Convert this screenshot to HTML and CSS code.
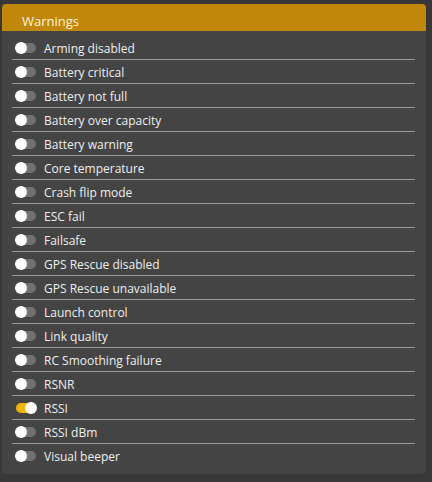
FILE: index.html
```html
<!DOCTYPE html>
<html>
<head>
<meta charset="utf-8">
<link rel="stylesheet" href="styles.css">
</head>
<body>
<div class="panel">
  <div class="header">Warnings</div>
  <ul class="list">
    <li class="row"><span class="toggle"></span><span class="label">Arming disabled</span></li>
    <li class="row"><span class="toggle"></span><span class="label">Battery critical</span></li>
    <li class="row"><span class="toggle"></span><span class="label">Battery not full</span></li>
    <li class="row"><span class="toggle"></span><span class="label">Battery over capacity</span></li>
    <li class="row"><span class="toggle"></span><span class="label">Battery warning</span></li>
    <li class="row"><span class="toggle"></span><span class="label">Core temperature</span></li>
    <li class="row"><span class="toggle"></span><span class="label">Crash flip mode</span></li>
    <li class="row"><span class="toggle"></span><span class="label">ESC fail</span></li>
    <li class="row"><span class="toggle"></span><span class="label">Failsafe</span></li>
    <li class="row"><span class="toggle"></span><span class="label">GPS Rescue disabled</span></li>
    <li class="row"><span class="toggle"></span><span class="label">GPS Rescue unavailable</span></li>
    <li class="row"><span class="toggle"></span><span class="label">Launch control</span></li>
    <li class="row"><span class="toggle"></span><span class="label">Link quality</span></li>
    <li class="row"><span class="toggle"></span><span class="label">RC Smoothing failure</span></li>
    <li class="row"><span class="toggle"></span><span class="label">RSNR</span></li>
    <li class="row"><span class="toggle on"></span><span class="label">RSSI</span></li>
    <li class="row"><span class="toggle"></span><span class="label">RSSI dBm</span></li>
    <li class="row"><span class="toggle"></span><span class="label">Visual beeper</span></li>
  </ul>
</div>
</body>
</html>
```
FILE: styles.css
```css
html, body {
  margin: 0;
  padding: 0;
  background: #383838;
  font-family: "Open Sans", "Liberation Sans", sans-serif;
}
body {
  padding: 4px 6px 8px 2px;
}
.panel {
  background: #434443;
  border-radius: 4px;
  overflow: hidden;
  height: 470px;
  box-sizing: border-box;
}
.header {
  background: #c0870a;
  color: #fff3dc;
  font-size: 13px;
  height: 20px;
  line-height: 20px;
  padding: 7px 0 0 20px;
}
.list {
  list-style: none;
  margin: 0;
  padding: 5px 11px 0 10px;
}
.row {
  display: flex;
  align-items: center;
  height: 23px;
  border-bottom: 1px solid #9a9a9a;
  color: #eeeeee;
  font-size: 12px;
}
.label {
  padding-top: 1px;
}
.row:last-child {
  border-bottom: none;
}
.toggle {
  position: relative;
  width: 20px;
  height: 10px;
  border-radius: 5px;
  background: #707070;
  margin-left: 4px;
  margin-right: 8px;
  flex: none;
}
.toggle::after {
  content: "";
  position: absolute;
  left: -1px;
  top: -1px;
  width: 12px;
  height: 12px;
  border-radius: 50%;
  background: #ffffff;
}
.toggle.on {
  background: #f0b400;
}
.toggle.on::after {
  left: auto;
  right: -1px;
}
```
